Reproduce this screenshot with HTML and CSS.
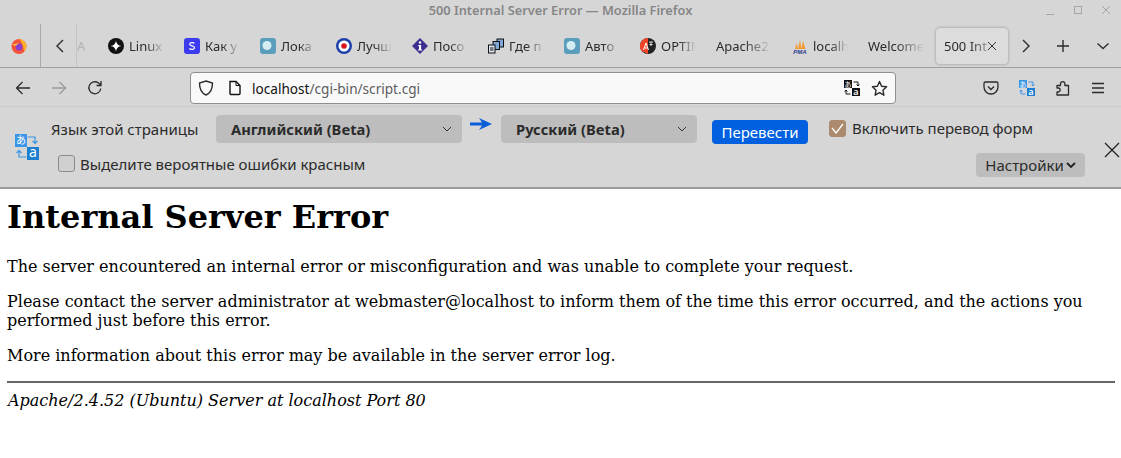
FILE: index.html
```html
<!DOCTYPE html>
<html lang="en">
<head>
  <meta charset="UTF-8">
  <title>500 Internal Server Error</title>
  <link rel="stylesheet" href="styles.css">
</head>
<body>
  <div class="titlebar">
    <span class="title">500 Internal Server Error — Mozilla Firefox</span>
    <div class="winbtns">
      <svg width="10" height="10" viewBox="0 0 10 10"><path d="M1 9.500h8" stroke="#a5a5a5" fill="none"/></svg>
      <svg width="10" height="10" viewBox="0 0 10 10"><rect x="1.500" y="1.500" width="7" height="7" stroke="#a5a5a5" fill="none"/></svg>
      <svg width="10" height="10" viewBox="0 0 10 10"><path d="M1 1l8 8M9 1l-8 8" stroke="#a5a5a5" fill="none"/></svg>
    </div>
  </div>

  <div class="tabbar">
    <div class="ff-slot">
      <svg width="16" height="16" viewBox="0 0 16 16">
        <circle cx="8" cy="8.500" r="7.500" fill="#f4533a"/>
        <path d="M8 .5c3.500 1 7.500 3.500 7.500 8 0 2-1 3.500-2.500 5-.5-4-1.500-9-5-13z" fill="#ffb22e"/>
        <circle cx="8" cy="9" r="3.400" fill="#8a3fd0"/>
        <path d="M1 6c2.500.5 5 0 7-1.500-1 2-2.500 3-4.500 3.200z" fill="#ffcb3d"/>
      </svg>
    </div>
    <button class="scroll-btn">
      <svg width="16" height="16" viewBox="0 0 16 16"><path d="M11 2L5 8l6 6" stroke="#2b2b2b" stroke-width="1.400" fill="none"/></svg>
    </button>
    <div class="tab-stub"><span>A</span></div>
    <div class="tab">
      <svg width="16" height="16" viewBox="0 0 16 16"><circle cx="8" cy="8" r="8" fill="#111"/><path d="M8 2.500c.6 3.500 2 4.900 5.500 5.500-3.500.6-4.900 2-5.500 5.500-.6-3.500-2-4.900-5.500-5.500 3.500-.6 4.900-2 5.500-5.500z" fill="#fff"/></svg>
      <span class="tab-label">Linux</span>
    </div>
    <div class="tab">
      <svg width="16" height="16" viewBox="0 0 16 16"><rect width="16" height="16" rx="3" fill="#3d3bf0"/><path d="M10.500 5.300C9.500 4.300 5.600 4.200 5.700 6.300c.1 2 4.800 1.200 4.800 3.400 0 2.200-4 2-5.100.8" stroke="#fff" stroke-width="1.200" fill="none"/></svg>
      <span class="tab-label">Как у</span>
    </div>
    <div class="tab">
      <svg width="16" height="16" viewBox="0 0 16 16"><rect width="16" height="16" rx="3" fill="#5a9dbd"/><circle cx="7" cy="7.500" r="4.500" fill="#d5ecf3"/></svg>
      <span class="tab-label">Лока</span>
    </div>
    <div class="tab">
      <svg width="16" height="16" viewBox="0 0 16 16"><circle cx="8" cy="8" r="8" fill="#1d3fa8"/><circle cx="8" cy="8" r="5.500" fill="#fff"/><circle cx="8" cy="8" r="2.800" fill="#d8181f"/></svg>
      <span class="tab-label">Лучш</span>
    </div>
    <div class="tab">
      <svg width="16" height="16" viewBox="0 0 16 16"><path d="M8 0l8 8-8 8-8-8z" fill="#3d2f8f"/><circle cx="8" cy="4.500" r="1.200" fill="#fff"/><path d="M6.200 7h2.900v4.500h1v1H6v-1h1V8H6.200z" fill="#fff"/></svg>
      <span class="tab-label">Посо</span>
    </div>
    <div class="tab">
      <svg width="16" height="16" viewBox="0 0 16 16"><rect x="9" y="1" width="6.500" height="8" fill="#7fa8d8" stroke="#111"/><rect x="5" y="3.500" width="6.500" height="8" fill="#7fa8d8" stroke="#111"/><rect x=".5" y="7" width="6.500" height="8" fill="#dfe8f2" stroke="#111"/><path d="M2 10h3.500M2 12h3.500" stroke="#111"/></svg>
      <span class="tab-label">Где п</span>
    </div>
    <div class="tab">
      <svg width="16" height="16" viewBox="0 0 16 16"><rect width="16" height="16" rx="3" fill="#5a9dbd"/><circle cx="7" cy="7.500" r="4.500" fill="#d5ecf3"/></svg>
      <span class="tab-label">Авто</span>
    </div>
    <div class="tab">
      <svg width="16" height="16" viewBox="0 0 16 16"><circle cx="8" cy="8" r="8" fill="#222"/><path d="M8 0a8 8 0 0 0-6 13.300L8 16z" fill="#f1452a"/><path d="M3.500 12L6 5l2.500 7M4.500 10h3" stroke="#fff" stroke-width="1" fill="none"/><path d="M9 4h4M9.500 6.500h3M11 4v4" stroke="#ddd" fill="none"/></svg>
      <span class="tab-label">OPTIM</span>
    </div>
    <div class="tab">
      <span class="tab-label">Apache2</span>
    </div>
    <div class="tab">
      <svg width="16" height="16" viewBox="0 0 16 16"><path d="M3 11l1.500-6L6 11zM6 11l2-9 1.500 9zM9.500 11L11 3l2.500 8z" fill="#f29a2e"/><text class="pma-text" x="8" y="15.500" text-anchor="middle">PMA</text></svg>
      <span class="tab-label">localh</span>
    </div>
    <div class="tab">
      <span class="tab-label">Welcome</span>
    </div>
    <div class="tab tab-active">
      <span class="tab-label">500 Int</span>
      <svg class="tab-close" width="10" height="10" viewBox="0 0 10 10"><path d="M1 1l8 8M9 1l-8 8" stroke="#333" fill="none"/></svg>
    </div>
    <div class="tabbar-end">
      <svg width="16" height="16" viewBox="0 0 16 16"><path d="M5 2l6 6-6 6" stroke="#2b2b2b" stroke-width="1.400" fill="none"/></svg>
      <svg width="14" height="14" viewBox="0 0 14 14"><path d="M7 1v12M1 7h12" stroke="#2b2b2b" stroke-width="1.400" fill="none"/></svg>
      <svg width="14" height="14" viewBox="0 0 14 14"><path d="M1.500 4.500L7 9.500l5.500-5" stroke="#2b2b2b" stroke-width="1.300" fill="none"/></svg>
    </div>
  </div>

  <div class="navbar">
    <svg class="nav-back" width="16" height="16" viewBox="0 0 16 16"><path d="M15 8H1.500M7.500 2l-6 6 6 6" stroke="#2b2b2b" stroke-width="1.300" fill="none"/></svg>
    <svg class="nav-fwd" width="16" height="16" viewBox="0 0 16 16"><path d="M1 8h13.500M8.500 2l6 6-6 6" stroke="#9a9a9a" stroke-width="1.300" fill="none"/></svg>
    <svg class="nav-reload" width="16" height="16" viewBox="0 0 16 16"><path d="M13.800 8.500A6 6 0 1 1 11.500 3L14 5M14 1v4.500H9.500" stroke="#2b2b2b" stroke-width="1.300" fill="none"/></svg>
    <div class="urlbar">
      <svg width="16" height="16" viewBox="0 0 16 16"><path d="M8 1l6.500 2c0 6-1.500 10-6.500 12C3 13 1.500 9 1.500 3z" stroke="#2b2b2b" stroke-width="1.400" fill="none"/></svg>
      <svg class="url-page" width="14" height="16" viewBox="0 0 14 16"><path d="M2 1.500h6l4 4v8a1 1 0 0 1-1 1H3a1 1 0 0 1-1-1z" stroke="#111" stroke-width="1.400" fill="none"/><path d="M8 1.500v4h4" stroke="#111" fill="none"/></svg>
      <span class="url-text"><span class="url-host">localhost</span>/cgi-bin/script.cgi</span>
      <svg class="url-trans" width="16" height="16" viewBox="0 0 16 16"><rect x="0" y="0" width="8" height="8" fill="#111"/><rect x="8" y="8" width="8" height="8" fill="#111"/><text class="glyph-ja" x="4" y="6.500" text-anchor="middle" fill="#fff">あ</text><text class="glyph-a" x="12" y="14.500" text-anchor="middle" fill="#fff">a</text><path d="M9.500 2H14v4M12.500 4.500L14 6l1.500-1.500M6.500 14H2v-4M.5 11.500L2 10l1.500 1.500" stroke="#111" fill="none"/></svg>
      <svg class="url-star" width="17" height="17" viewBox="0 0 17 17"><path d="M8.500 1.500l2.100 4.700 5 .6-3.700 3.400 1 5-4.400-2.500-4.400 2.500 1-5L1.400 6.800l5-.6z" stroke="#2b2b2b" stroke-width="1.400" fill="none" stroke-linejoin="round"/></svg>
    </div>
    <div class="nav-tools">
      <svg width="16" height="16" viewBox="0 0 16 16"><path d="M2.500 2h11A1.500 1.500 0 0 1 15 3.500V7A7 7 0 0 1 1 7V3.500A1.500 1.500 0 0 1 2.500 2z" stroke="#2b2b2b" stroke-width="1.300" fill="none"/><path d="M5 6.500l3 3 3-3" stroke="#2b2b2b" stroke-width="1.300" fill="none"/></svg>
      <svg width="16" height="16" viewBox="0 0 16 16"><rect x="0" y="0" width="8" height="8" fill="#3a95e6"/><rect x="8" y="8" width="8" height="8" fill="#1c7fd0"/><text class="glyph-ja" x="4" y="6.500" text-anchor="middle" fill="#fff">あ</text><text class="glyph-a" x="12" y="14.500" text-anchor="middle" fill="#fff">a</text><path d="M9.500 2H14v4M12.500 4.500L14 6l1.500-1.500M6.500 14H2v-4M.5 11.500L2 10l1.500 1.500" stroke="#3a95e6" fill="none"/></svg>
      <svg width="16" height="16" viewBox="0 0 16 16"><path d="M2 5.500h3.500V3.800a2.200 2.200 0 1 1 4.400 0v1.700h3.600v9.500H2v-3h1.200a2 2 0 0 0 0-4H2z" stroke="#2b2b2b" stroke-width="1.300" fill="none" stroke-linejoin="round"/></svg>
      <svg width="14" height="12" viewBox="0 0 14 12"><path d="M1 1.500h12M1 6h12M1 10.500h12" stroke="#2b2b2b" stroke-width="1.300" fill="none"/></svg>
    </div>
  </div>

  <div class="transbar">
    <svg class="trans-icon" width="24" height="26" viewBox="0 0 24 26"><rect x="0" y="0" width="12" height="13" fill="#3a95e6"/><rect x="12" y="13" width="12" height="13" fill="#1c7fd0"/><text class="glyph-ja-lg" x="6" y="10" text-anchor="middle" fill="#fff">あ</text><text class="glyph-a-lg" x="18" y="23" text-anchor="middle" fill="#fff">a</text><path d="M12.500 3H20v6M17.500 7L20 9.500 22.500 7M11.500 23H4v-6M1.500 19L4 16.500 6.500 19" stroke="#3a95e6" stroke-width="1.200" fill="none"/></svg>
    <div class="trans-rows">
      <div class="trans-row">
        <span class="trans-label">Язык этой страницы</span>
        <div class="select select-from">Английский (Beta)<svg width="10" height="6" viewBox="0 0 10 6"><path d="M1 1l4 4 4-4" stroke="#333" fill="none"/></svg></div>
        <svg class="trans-arrow" width="22" height="12" viewBox="0 0 22 12"><path d="M0 4.500h12L9 0l13 6-13 6 3-4.500H0z" fill="#0b5fd8"/></svg>
        <div class="select select-to">Русский (Beta)<svg width="10" height="6" viewBox="0 0 10 6"><path d="M1 1l4 4 4-4" stroke="#333" fill="none"/></svg></div>
        <div class="btn-translate">Перевести</div>
        <div class="check check-on"><svg width="13" height="11" viewBox="0 0 13 11"><path d="M1 5l4 5 7-9" stroke="#fff" stroke-width="1.300" fill="none"/></svg></div>
        <span class="check-label">Включить перевод форм</span>
      </div>
      <div class="trans-row row-two">
        <div class="check"></div>
        <span class="check-label">Выделите вероятные ошибки красным</span>
        <div class="btn-settings">Настройки<svg width="10" height="7" viewBox="0 0 10 7"><path d="M1 1l4 4 4-4" stroke="#222" stroke-width="1.800" fill="none"/></svg></div>
      </div>
    </div>
    <svg class="trans-close" width="16" height="16" viewBox="0 0 16 16"><path d="M1 1l14 14M15 1L1 15" stroke="#222" stroke-width="1.300" fill="none"/></svg>
  </div>

  <main class="page">
    <h1>Internal Server Error</h1>
    <p>The server encountered an internal error or misconfiguration and was unable to complete your request.</p>
    <p>Please contact the server administrator at webmaster@localhost to inform them of the time this error occurred, and the actions you performed just before this error.</p>
    <p>More information about this error may be available in the server error log.</p>
    <hr>
    <address>Apache/2.4.52 (Ubuntu) Server at localhost Port 80</address>
  </main>
</body>
</html>
```

FILE: styles.css
```css
html, body {
  margin: 0;
  padding: 0;
  background-color: #fff;
  overflow: hidden;
}

body {
  font-family: "Noto Sans", sans-serif;
  color: #2b2b2b;
}

svg {
  display: block;
  flex: none;
}

.glyph-ja {
  font-family: "Noto Sans CJK JP", sans-serif;
  font-size: 7px;
}

.glyph-a {
  font-family: "Noto Sans", sans-serif;
  font-size: 9px;
  font-weight: 600;
}

.glyph-ja-lg {
  font-family: "Noto Sans CJK JP", sans-serif;
  font-size: 10px;
}

.glyph-a-lg {
  font-family: "Noto Sans", sans-serif;
  font-size: 14px;
}

.pma-text {
  font-family: "Liberation Sans", sans-serif;
  font-size: 6px;
  font-weight: 700;
  font-style: italic;
  fill: #2f3d8f;
}

.titlebar {
  height: 23px;
  padding-bottom: 3px;
  box-sizing: border-box;
  background-color: #d6d6d6;
  display: flex;
  align-items: center;
  justify-content: center;
  position: relative;
}

.title {
  font-size: 12.800px;
  font-weight: 600;
  color: #868686;
}

.winbtns {
  position: absolute;
  right: 10px;
  top: 5px;
  display: flex;
  gap: 18px;
}

.tabbar {
  height: 45px;
  padding-top: 1px;
  box-sizing: border-box;
  background-color: #d6d6d6;
  border-bottom: 1px solid #a0a0a0;
  display: flex;
  align-items: center;
  font-size: 13px;
}

.ff-slot {
  width: 41px;
  height: 43px;
  border-right: 1px solid #a8a8a8;
  box-sizing: border-box;
  display: flex;
  align-items: center;
  padding-left: 11px;
  flex: none;
}

.scroll-btn {
  width: 36px;
  height: 43px;
  background: none;
  border: none;
  padding: 0 0 0 11px;
  border-right: 1px solid #c4c4c4;
  box-sizing: border-box;
  flex: none;
}

.tab-stub {
  width: 21px;
  color: #b4b4b4;
  flex: none;
  overflow: hidden;
}

.tab {
  width: 72px;
  height: 36px;
  margin: 0 2px;
  padding: 0 8px;
  box-sizing: border-box;
  display: flex;
  align-items: center;
  gap: 5px;
  flex: none;
  position: relative;
}

.tab-label {
  flex: 1;
  min-width: 0;
  overflow: hidden;
  white-space: nowrap;
  -webkit-mask-image: linear-gradient(to right, #000 50%, transparent 100%);
  mask-image: linear-gradient(to right, #000 50%, transparent 100%);
}

.tab-active {
  background-color: #dcdcdc;
  border-radius: 4px;
  box-shadow: 0 0 3px rgba(0, 0, 0, 0.35);
}

.tab-active .tab-label {
  -webkit-mask-image: linear-gradient(to right, #000 45%, rgba(0, 0, 0, 0.2) 85%);
  mask-image: linear-gradient(to right, #000 45%, rgba(0, 0, 0, 0.2) 85%);
}

.tab-close {
  position: absolute;
  right: 11px;
  top: 13px;
}

.tabbar-end {
  display: flex;
  align-items: center;
  margin-left: 8px;
}

.tabbar-end svg:nth-child(2) {
  margin-left: 22px;
}

.tabbar-end svg:nth-child(3) {
  margin-left: 26px;
}

.navbar {
  height: 38px;
  padding: 2px 0 0 15px;
  background-color: #d6d6d6;
  display: flex;
  align-items: center;
  box-sizing: border-box;
}

.nav-fwd {
  margin-left: 20px;
}

.nav-reload {
  margin-left: 20px;
}

.urlbar {
  width: 706px;
  height: 32px;
  margin-left: 87px;
  background-color: #f9f9f9;
  border: 1px solid #8f8f8f;
  border-radius: 4px;
  box-sizing: border-box;
  display: flex;
  align-items: center;
  padding: 0 7px;
  flex: none;
}

.url-page {
  margin-left: 14px;
}

.url-text {
  margin-left: 10px;
  font-size: 13.600px;
  color: #5c5c5c;
  flex: 1;
}

.url-host {
  color: #111;
}

.url-star {
  margin-left: 11px;
}

.nav-tools {
  display: flex;
  align-items: center;
  gap: 20px;
  margin-left: 87px;
}

.transbar {
  height: 83px;
  background-color: #d6d6d6;
  border-top: 1px solid #cbcbcb;
  border-bottom: 2px solid #9a9a9a;
  box-sizing: border-box;
  display: flex;
  font-size: 15px;
  position: relative;
}

.trans-icon {
  margin: 27px 0 0 15px;
}

.trans-rows {
  flex: 1;
  margin-left: 12px;
  padding-top: 8px;
}

.trans-row {
  display: flex;
  align-items: flex-start;
  height: 28px;
}

.trans-label {
  width: 165px;
  line-height: 28px;
}

.select {
  height: 28px;
  background-color: #bdbdbd;
  border-radius: 4px;
  box-sizing: border-box;
  padding: 0 10px 0 15px;
  display: flex;
  align-items: center;
  justify-content: space-between;
  font-size: 14.700px;
  font-weight: 700;
}

.select-from {
  width: 246px;
}

.select-to {
  width: 196px;
}

.trans-arrow {
  margin: 3px 9px 0 8px;
}

.btn-translate {
  width: 96px;
  height: 24px;
  margin: 5px 0 0 15px;
  background-color: #0060df;
  color: #fff;
  border-radius: 4px;
  text-align: center;
  line-height: 24px;
}

.check {
  width: 17px;
  height: 17px;
  background-color: #d0d0d0;
  border: 1px solid #8c8c8c;
  border-radius: 3px;
  box-sizing: border-box;
  flex: none;
  margin-top: 5px;
}

.check-on {
  margin-left: 21px;
  background-color: #ab8a6e;
  border-color: #ab8a6e;
  display: flex;
  align-items: center;
  justify-content: center;
}

.check-label {
  margin-left: 6px;
  line-height: 26px;
}

.row-two {
  margin-top: 12px;
  padding-left: 7px;
}

.row-two .check {
  margin-top: 0;
}

.row-two .check-label {
  margin-left: 5px;
  line-height: 18px;
}

.btn-settings {
  width: 109px;
  height: 24px;
  margin-left: auto;
  margin-right: 36px;
  margin-top: -2px;
  background-color: #bdbdbd;
  border-radius: 4px;
  display: flex;
  align-items: center;
  justify-content: center;
  gap: 2px;
}

.trans-close {
  position: absolute;
  right: 1px;
  top: 35px;
}

.page {
  padding: 9px 6px 0 7px;
  font-family: "DejaVu Serif", serif;
  font-size: 16px;
  color: #000;
}

.page h1 {
  margin: 0 0 21px 0;
  font-size: 32px;
  line-height: 38px;
}

.page p {
  margin: 16px 0;
  line-height: 19px;
}

.page hr {
  margin: 16px 0 8px 0;
  height: 2px;
  border: none;
  background-color: #666;
}

.page address {
  padding-left: 1px;
  line-height: 19px;
}
```
